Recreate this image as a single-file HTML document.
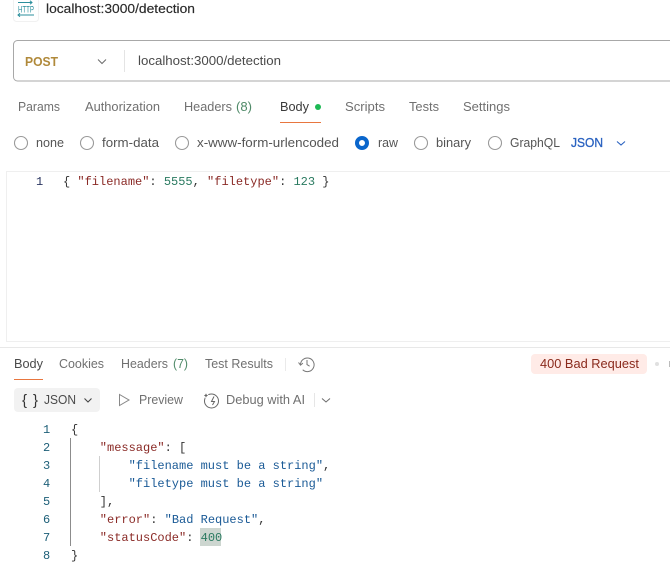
<!DOCTYPE html>
<html><head><meta charset="utf-8"><style>
html,body{margin:0;padding:0;background:#fff;width:670px;height:580px;overflow:hidden}
svg{display:block}
text{font-family:"Liberation Sans",sans-serif;font-size:13px;fill:#707070}
.d{fill:#3a3a3a}
.m{font-family:"Liberation Mono",monospace;font-size:12px;white-space:pre}
.k{fill:#8a2a26}.s{fill:#1a5a96}.n{fill:#2a7a60}.p{fill:#333}.l{fill:#1d5f78}
.r{fill:#fff;stroke:#9a9a9a;stroke-width:1.1}
.c{fill:none;stroke:#6b6b6b;stroke-width:1}
</style></head><body>
<svg width="670" height="580" viewBox="0 0 670 580" xmlns="http://www.w3.org/2000/svg">
<rect x="13.5" y="-6" width="25" height="27.5" rx="3" fill="#fff" stroke="#f1f1f1"/>
<g fill="none" stroke="#2b8f9c" stroke-width="1">
<path d="M18 2.5H32M30 .8l2 1.7-2 1.7"/>
<path d="M18 15H34M20 13.3l-2 1.7 2 1.7"/>
</g>
<text x="18" y="12.5" style="font-size:9.5px;fill:#2b8f9c" textLength="16" lengthAdjust="spacingAndGlyphs">HTTP</text>
<text x="46" y="13" style="font-size:13px;fill:#2b2b2b;stroke:#2b2b2b;stroke-width:.15" textLength="149" lengthAdjust="spacingAndGlyphs">localhost:3000/detection</text>

<rect x="13.5" y="40.5" width="680" height="40.5" rx="4" fill="#fff" stroke="#a8a8a8"/>
<text x="25" y="66" style="font-weight:bold;fill:#b0893a" textLength="33" lengthAdjust="spacingAndGlyphs">POST</text>
<path d="M98 59.5l4 4 4-4" class="c"/>
<rect x="124" y="50" width="1" height="22" fill="#e4e4e4"/>
<text x="138" y="65" style="fill:#4a4a4a" textLength="143" lengthAdjust="spacingAndGlyphs">localhost:3000/detection</text>

<text x="18" y="111" textLength="42" lengthAdjust="spacingAndGlyphs">Params</text>
<text x="85" y="111" textLength="75" lengthAdjust="spacingAndGlyphs">Authorization</text>
<text x="184" y="111" textLength="48" lengthAdjust="spacingAndGlyphs">Headers</text>
<text x="236" y="111" style="fill:#4f8a68" textLength="16" lengthAdjust="spacingAndGlyphs">(8)</text>
<text x="280" y="111" class="d" textLength="29" lengthAdjust="spacingAndGlyphs">Body</text>
<circle cx="318" cy="107" r="3" fill="#1db954"/>
<rect x="280" y="122" width="41" height="1" fill="#e8763f"/>
<text x="345" y="111" textLength="40" lengthAdjust="spacingAndGlyphs">Scripts</text>
<text x="409" y="111" textLength="30" lengthAdjust="spacingAndGlyphs">Tests</text>
<text x="463" y="111" textLength="47" lengthAdjust="spacingAndGlyphs">Settings</text>

<circle cx="21" cy="143" r="6.5" class="r"/>
<text x="36" y="147" style="fill:#555" textLength="28" lengthAdjust="spacingAndGlyphs">none</text>
<circle cx="87" cy="143" r="6.5" class="r"/>
<text x="102" y="147" style="fill:#555" textLength="57" lengthAdjust="spacingAndGlyphs">form-data</text>
<circle cx="182" cy="143" r="6.5" class="r"/>
<text x="197" y="147" style="fill:#555" textLength="142" lengthAdjust="spacingAndGlyphs">x-www-form-urlencoded</text>
<circle cx="362" cy="143" r="5" fill="#fff" stroke="#0a66cc" stroke-width="4"/>
<text x="378" y="147" style="fill:#555" textLength="20" lengthAdjust="spacingAndGlyphs">raw</text>
<circle cx="421" cy="143" r="6.5" class="r"/>
<text x="436" y="147" style="fill:#555" textLength="35" lengthAdjust="spacingAndGlyphs">binary</text>
<circle cx="495" cy="143" r="6.5" class="r"/>
<text x="510" y="147" style="fill:#555" textLength="50" lengthAdjust="spacingAndGlyphs">GraphQL</text>
<text x="571" y="147" style="fill:#2a62c0;stroke:#2a62c0;stroke-width:.3" textLength="32" lengthAdjust="spacingAndGlyphs">JSON</text>
<path d="M617 141.5l4 3.5 4-3.5" fill="none" stroke="#2a62c0" stroke-width="1.1"/>

<path d="M670 171.5H6.5V341.5H670" fill="none" stroke="#efefef"/>
<text x="36" y="185" class="m" style="fill:#2a3560">1</text>
<text x="63" y="185" class="m p">{ <tspan class="k">"filename"</tspan>: <tspan class="n">5555</tspan>, <tspan class="k">"filetype"</tspan>: <tspan class="n">123</tspan> }</text>

<rect x="0" y="347" width="670" height="1" fill="#e8e8e8"/>
<text x="14" y="368" style="fill:#4a4a4a" textLength="29" lengthAdjust="spacingAndGlyphs">Body</text>
<rect x="14" y="379" width="29" height="1" fill="#e8763f"/>
<text x="59" y="368" textLength="45" lengthAdjust="spacingAndGlyphs">Cookies</text>
<text x="121" y="368" textLength="47" lengthAdjust="spacingAndGlyphs">Headers</text>
<text x="173" y="368" style="fill:#4f8a68" textLength="15" lengthAdjust="spacingAndGlyphs">(7)</text>
<text x="205" y="368" textLength="68" lengthAdjust="spacingAndGlyphs">Test Results</text>
<rect x="285" y="358" width="1" height="13" fill="#eaeaea"/>
<g fill="none" stroke="#777" stroke-width="1">
<path d="M300.5 365a6.8 6.8 0 1 1 2.2 4.8"/>
<path d="M298.5 362.5l2 2.6 2.4-2"/>
<path d="M307 360v4.6l2.6 1.6"/>
</g>
<rect x="531" y="354" width="116" height="20" rx="4" fill="#ffebe7"/>
<text x="540" y="368" style="fill:#8a2a1c" textLength="99" lengthAdjust="spacingAndGlyphs">400 Bad Request</text>
<circle cx="657" cy="364" r="2" fill="#e0e0e0"/>
<rect x="669" y="361" width="1" height="6" fill="#bbb"/>

<rect x="14" y="388" width="86" height="24" rx="4" fill="#f2f2f2"/>
<text x="22" y="405" style="font-size:15px;fill:#333" textLength="16" lengthAdjust="spacing">{}</text>
<text x="44" y="404" style="fill:#4a4a4a" textLength="32" lengthAdjust="spacingAndGlyphs">JSON</text>
<path d="M84.5 398.5l3.5 3.5 3.5-3.5" fill="none" stroke="#444" stroke-width="1.1"/>
<path d="M119.5 394.5v11l9.5-5.5z" fill="none" stroke="#888" stroke-width="1"/>
<text x="139" y="404" textLength="44" lengthAdjust="spacingAndGlyphs">Preview</text>
<g fill="none" stroke="#666" stroke-width="1">
<circle cx="211.5" cy="401" r="7"/>
<path d="M214 396.5l-2.5 5h3l-2 3.5"/>
</g>
<path d="M206 392.5l1 2 2 1-2 1-1 2-1-2-2-1 2-1z" fill="#666" stroke="#fff" stroke-width=".8"/>
<text x="226" y="404" textLength="79" lengthAdjust="spacingAndGlyphs">Debug with AI</text>
<rect x="314" y="393" width="1" height="14" fill="#e6e6e6"/>
<path d="M322 398.5l4 3.5 4-3.5" class="c"/>

<rect x="200" y="528" width="21" height="18" fill="#cdd6d0"/>
<rect x="70" y="438" width="1" height="108" fill="#8c8c8c"/>
<rect x="99" y="456" width="1" height="36" fill="#cfcfcf"/>
<g>
<text x="43" y="433" class="m l">1</text>
<text x="43" y="451" class="m l">2</text>
<text x="43" y="469" class="m l">3</text>
<text x="43" y="487" class="m l">4</text>
<text x="43" y="505" class="m l">5</text>
<text x="43" y="523" class="m l">6</text>
<text x="43" y="541" class="m l">7</text>
<text x="43" y="559" class="m l">8</text>
<text x="71" y="433" class="m p">{</text>
<text x="99.8" y="451" class="m p"><tspan class="k">"message"</tspan>: [</text>
<text x="128.6" y="469" class="m p"><tspan class="s">"filename must be a string"</tspan>,</text>
<text x="128.6" y="487" class="m s">"filetype must be a string"</text>
<text x="99.8" y="505" class="m p">],</text>
<text x="99.8" y="523" class="m p"><tspan class="k">"error"</tspan>: <tspan class="s">"Bad Request"</tspan>,</text>
<text x="99.8" y="541" class="m p"><tspan class="k">"statusCode"</tspan>: <tspan class="n">400</tspan></text>
<text x="71" y="559" class="m p">}</text>
</g>
</svg>
</body></html>
